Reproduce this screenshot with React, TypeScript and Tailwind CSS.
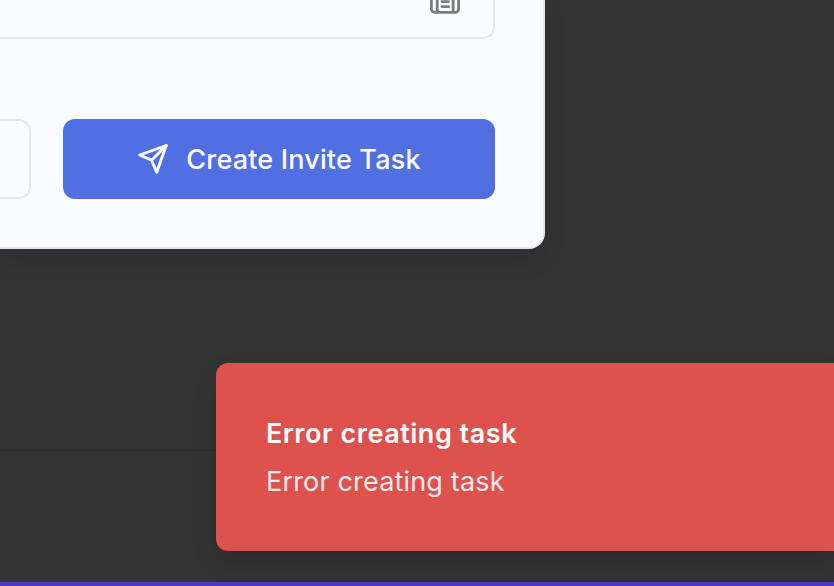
import React from "react";

function SendIcon() {
  return (
    <svg className="size-8 shrink-0" viewBox="0 0 32 32" fill="none" stroke="currentColor" strokeWidth="2.9" strokeLinecap="round" strokeLinejoin="round">
      <path d="M29.2 2.6 19.7 29.2l-5.1-12L2.6 12Z" />
      <path d="M29.2 2.6 14.6 17.2" />
    </svg>
  );
}

function NewspaperIcon() {
  return (
    <svg className="h-8 w-8 shrink-0 text-[#7b7b7b]" viewBox="0 0 32 32" fill="none" stroke="currentColor" strokeWidth="2.8">
      <rect x="2.4" y="3" width="27.2" height="26.3" rx="3.2" />
      <path d="M8.2 3v26M24.1 3v26" />
      <path d="M13 18.6h6.6M13 23.7h6.6" strokeLinecap="round" />
    </svg>
  );
}

export default function App() {
  return (
    <div className="flex h-[586px] w-[834px] flex-col overflow-hidden bg-[#333333] font-[Inter,sans-serif]">
      <div className="h-[249px] w-[545px] shrink-0 rounded-br-[16px] border-r-2 border-b-2 border-[#e2e8f0] bg-[#fafcff] shadow-[0_12px_24px_rgba(0,0,0,0.09)]">
        <div className="flex h-[39px] w-[495px] items-end justify-end rounded-br-[12px] border-r-2 border-b-2 border-[#e2e8f0] pr-8 pb-[22px]">
          <NewspaperIcon />
        </div>
        <div className="mt-20 flex h-20 gap-8">
          <div className="w-[31px] rounded-r-[12px] border-y-2 border-r-2 border-[#e2e8f0]" />
          <button className="flex w-[432px] items-center justify-center gap-[17px] rounded-[12px] bg-[#526ee3] text-[27px] font-medium tracking-[0.17px] text-[#fafcff]">
            <SendIcon />
            <span className="pt-[3px] whitespace-nowrap">Create Invite Task</span>
          </button>
        </div>
      </div>
      <div className="mt-[114px] flex h-[188px] shrink-0">
        <div className="mt-[86px] h-[2px] w-[216px] bg-[#2f2f2f]" />
        <div className="flex w-[618px] flex-col rounded-l-[12px] bg-[#dd524c] pt-[51px] pl-[50px] text-[27px] text-[#fafcff] shadow-[0_12px_24px_rgba(0,0,0,0.12)]">
          <div className="h-10 leading-10 font-semibold tracking-[0.52px]">Error creating task</div>
          <div className="mt-2 h-10 leading-10 tracking-[0.17px] opacity-90">Error creating task</div>
        </div>
      </div>
      <div className="mt-[31px] h-1 shrink-0 bg-[#5038c0]" />
    </div>
  );
}
